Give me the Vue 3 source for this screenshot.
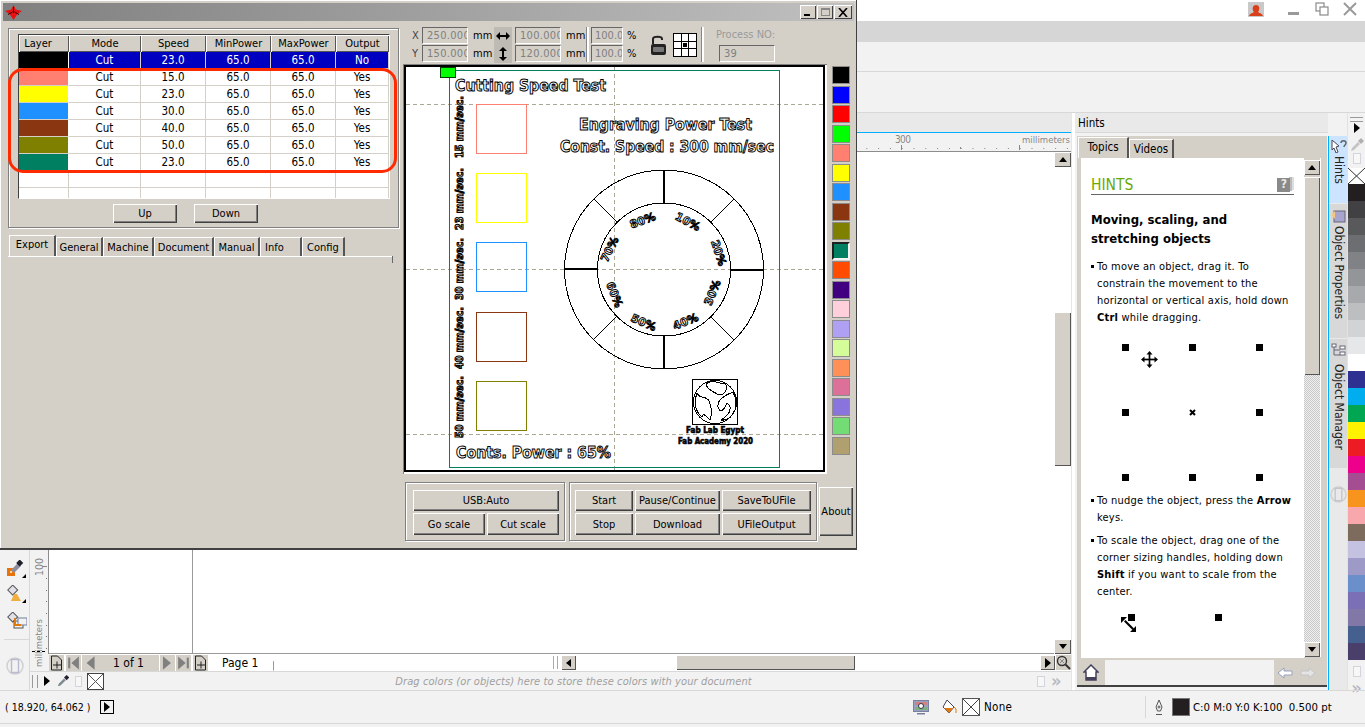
<script setup>
const layers = [
  { c: '#000000', s: '23.0', o: 'No', sel: true },
  { c: '#ff8070', s: '15.0', o: 'Yes' },
  { c: '#ffff00', s: '23.0', o: 'Yes' },
  { c: '#1e90ff', s: '30.0', o: 'Yes' },
  { c: '#8a3610', s: '40.0', o: 'Yes' },
  { c: '#808000', s: '50.0', o: 'Yes' },
  { c: '#008060', s: '23.0', o: 'Yes' }
]
const heads = ['Layer', 'Mode', 'Speed', 'MinPower', 'MaxPower', 'Output']
const tabs = [
  { t: 'Export', w: 47, active: true }, { t: 'General', w: 47 }, { t: 'Machine', w: 51 },
  { t: 'Document', w: 60 }, { t: 'Manual', w: 46 }, { t: 'Info', w: 42, left: true }, { t: 'Config', w: 43 }
]
const swatches = ['#000000','#0000ff','#ff0000','#00ff00','#ff8070','#ffff00','#1e90ff','#8a3610','#808000','#008060','#ff4c00','#400080','#ffd0dc','#b0a0f4','#d4fc98','#ff9058','#dc7098','#8874dc','#74dc74','#b0a070']
const selectedSwatch = '#008060'
const palette = ['#231f20','#414042','#58595b','#6d6e71','#808285','#939598','#a7a9ac','#bcbec0','#d1d3d4','#e6e7e8','#ffffff','#2e3192','#00aeef','#00a651','#fff200','#ed1c24','#ec008c','#a54d93','#f7941d','#f8a7ad','#7d6b5d','#c4c2e0','#9e9ac8','#6a8fcb','#7b6fb5','#8278a8','#45608f','#4a3f6b']
const squares = [
  { y: 104, c: '#ff8070' }, { y: 173, c: '#ffff00' }, { y: 242, c: '#1e90ff' },
  { y: 312, c: '#8a3610' }, { y: 381, c: '#808000' }
]
const vlabels = [
  { t: '15 mm/sec.', y: 158 }, { t: '23 mm/sec.', y: 230 }, { t: '30 mm/sec.', y: 300 },
  { t: '40 mm/sec.', y: 369 }, { t: '50 mm/sec.', y: 438 }
]
const pct = [
  { t: '10%', x: 686, y: 221, r: 28 }, { t: '20%', x: 715, y: 250, r: 72 },
  { t: '30%', x: 716, y: 290, r: -68 }, { t: '40%', x: 687, y: 321, r: -22 },
  { t: '50%', x: 642, y: 322, r: 24 }, { t: '60%', x: 611, y: 292, r: 68 },
  { t: '70%', x: 613, y: 247, r: -64 }, { t: '80%', x: 644, y: 220, r: -20 }
]
const hticks = Array.from({ length: 18 }, (_, i) => 866.3 + i * 11.8)
const vticks = [578, 590, 601, 613, 625, 636, 648]
const grid = Array.from({ length: 9 }, (_, i) => i)
</script>

<template>
  <div class="app">
    <header class="c-title">
      <svg class="ic-user" width="16" height="15" viewBox="0 0 16 15"><rect width="16" height="15" fill="#c9c9c9"/><path d="M1 14c1-3 4-3 5-4-2-2-2-7 2-7s4 5 2 7c1 1 4 1 5 4z" fill="#d8401c"/></svg>
      <span class="ic-min"></span>
      <svg class="ic-rest" width="14" height="14" viewBox="0 0 14 14" fill="#fff" stroke="#8a8a8a" stroke-width="1.2"><rect x="1" y="1" width="8" height="8"/><rect x="5" y="5" width="8" height="8"/></svg>
      <svg class="ic-close" width="14" height="14" viewBox="0 0 14 14" stroke="#9a9a9a" stroke-width="2"><path d="M1 1l12 12M13 1L1 13"/></svg>
    </header>
    <div class="c-menu"></div>
    <div class="c-tool"></div>
    <div class="c-prop"></div>

    <div class="c-work">
      <aside class="toolbox">
        <svg class="tool-ic t1" width="20" height="18" viewBox="0 0 20 18"><rect x="1" y="8" width="8" height="8" fill="#e8720c"/><rect x="4" y="11" width="2" height="2" fill="#ffd9a0"/><path d="M5 10l7-7 3 3-7 7z" fill="#8d8da0"/><rect x="11" y="0" width="5" height="5" fill="#20202c" transform="rotate(45 13 3)"/><path d="M16 18h4v-4z" fill="#000"/></svg>
        <svg class="tool-ic t2" width="20" height="18" viewBox="0 0 20 18"><rect x="3" y="1" width="7" height="7" fill="#dfe0ea" stroke="#555" transform="rotate(45 6 5)"/><path d="M5 16l3-7h3l4 7z" fill="#f0b040"/><path d="M16 18h4v-4z" fill="#000"/></svg>
        <svg class="tool-ic t3" width="20" height="18" viewBox="0 0 20 18"><rect x="2" y="1" width="7" height="7" fill="#dfe0ea" stroke="#555" transform="rotate(45 5 5)"/><rect x="7" y="9" width="9" height="7" fill="none" stroke="#555"/><rect x="11" y="6" width="9" height="7" fill="#f2f2f2" stroke="#7080a0"/><path d="M8 6v7h6" fill="none" stroke="#e07810" stroke-width="2"/></svg>
        <div class="tool-sep"></div>
        <svg class="tool-ic t4" width="18" height="18" viewBox="0 0 18 18" fill="none"><circle cx="9" cy="9" r="8" stroke="#cfcfcf" stroke-width="1.5"/><rect x="5.5" y="2.5" width="7" height="13" stroke="#b8bcd0" stroke-width="1.4"/></svg>
      </aside>

      <div class="doc-area">
        <div class="doc-tabs"></div>
        <div class="h-ruler">
          <svg class="ruler-svg" width="1041" height="19" viewBox="30 133 1041 19">
            <rect v-for="x in hticks" :key="x" :x="x" y="148" width="1" height="1" fill="#888"/>
            <path d="M901.5 145v5M960.5 147v2M1019.5 145v5" stroke="#888"/>
          </svg>
          <span class="r-300">300</span>
          <span class="r-mm">millimeters</span>
        </div>
        <div class="mid">
          <div class="v-ruler">
            <span class="vr-100">100</span>
            <span class="vr-mm">millimeters</span>
            <svg class="vr-ticks" width="19" height="120" viewBox="30 550 19 120">
              <rect v-for="y in vticks" :key="y" x="46" :y="y" width="1" height="1" fill="#777"/>
              <path d="M42 566.5h5" stroke="#888"/>
              <path d="M32 651.5h15" stroke="#000" stroke-dasharray="3 2"/>
            </svg>
          </div>
          <div class="canvas"><div class="page-line"></div></div>
          <div class="v-scroll">
            <div class="sb-btn"><span class="tri-up"></span></div>
            <div class="v-gap1"></div>
            <div class="v-thumb"></div>
            <div class="v-gap2"></div>
            <div class="sb-btn"><span class="tri-down"></span></div>
          </div>
        </div>
        <div class="pager">
          <svg class="pg-add" width="15" height="15" viewBox="0 0 15 15" fill="none" stroke="#222"><path d="M2.5.5h6l4 4v10h-10z"/><path d="M4 9.5h8M8 6v7"/></svg>
          <svg class="pg-first" width="14" height="14" viewBox="0 0 14 14" fill="#808080"><rect x="2" y="2" width="2" height="10"/><path d="M12 1v12L5 7z"/></svg>
          <svg class="pg-prev" width="10" height="14" viewBox="0 0 10 14" fill="#808080"><path d="M9 1v12L2 7z"/></svg>
          <span class="pg-txt">1 of 1</span>
          <svg class="pg-next" width="10" height="14" viewBox="0 0 10 14" fill="#808080"><path d="M1 1v12l7-6z"/></svg>
          <svg class="pg-last" width="14" height="14" viewBox="0 0 14 14" fill="#808080"><rect x="10" y="2" width="2" height="10"/><path d="M2 1v12l7-6z"/></svg>
          <svg class="pg-add2" width="15" height="15" viewBox="0 0 15 15" fill="none" stroke="#222"><path d="M2.5.5h6l4 4v10h-10z"/><path d="M4 9.5h8M8 6v7"/></svg>
          <div class="pg-tab">Page 1</div>
          <div class="grip"></div>
          <div class="sb-btn sb-left"><span class="tri-left"></span></div>
          <div class="h-thumb"></div>
          <div class="sb-btn sb-right"><span class="tri-right"></span></div>
          <svg class="zoom-ic" width="15" height="15" viewBox="0 0 15 15" fill="none" stroke="#333"><circle cx="6" cy="6" r="4.5" stroke-width="1.4"/><path d="M9.5 9.5l4.5 4.5" stroke-width="2"/><path d="M4 4l4 4M8 4l-4 4" stroke="#888"/></svg>
        </div>
        <div class="color-doc">
          <div class="cd-left">
            <span class="bars"></span>
            <span class="tri-right"></span>
            <svg class="cd-drop" width="14" height="14" viewBox="0 0 14 14"><path d="M1 13l1-3 6-6 2 2-6 6z" fill="#7f8a90"/><path d="M8 3l3-3 3 3-3 3z" fill="#223"/></svg>
            <span class="chip"></span>
            <svg class="xbox" width="17" height="17" viewBox="0 0 17 17"><rect x=".5" y=".5" width="16" height="16" fill="#fff" stroke="#444"/><path d="M1 1l15 15M16 1L1 16" stroke="#555"/></svg>
          </div>
          <span class="cd-text">Drag colors (or objects) here to store these colors with your document</span>
          <div class="cd-right">
            <span class="chip"></span>
            <span class="chev">»</span>
          </div>
        </div>
      </div>

      <div class="strip"></div>

      <section class="docker">
        <div class="dk-head">
          <span>Hints</span>
        </div>
        <div class="dk-panel">
          <div class="dk-tabs">
            <div class="dk-tab on">Topics</div>
            <div class="dk-tab">Videos</div>
          </div>
          <div class="dk-body">
            <div class="dk-content">
              <div class="hints-head">
                <span class="hints-t">HINTS</span>
                <svg width="17" height="15" viewBox="0 0 17 15"><rect x="14" y="0" width="3" height="13" fill="#ddd"/><rect x="12" y="0" width="3" height="14" fill="#bbb"/><rect y="1" width="13" height="14" fill="#8a8a8a"/></svg>
                <span class="q">?</span>
              </div>
              <h2 class="hd">Moving, scaling, and<br>stretching objects</h2>
              <ul class="bl first">
                <li>To move an object, drag it. To<br>constrain the movement to the<br>horizontal or vertical axis, hold down<br><b>Ctrl</b> while dragging.</li>
              </ul>
              <div class="handles">
                <template v-for="i in grid" :key="i">
                  <svg v-if="i === 4" width="7" height="7" viewBox="0 0 7 7" stroke="#000" stroke-width="2"><path d="M1 1l5 5M6 1L1 6"/></svg>
                  <span v-else class="hd-sq"></span>
                </template>
                <svg class="mv" width="17" height="17" viewBox="0 0 17 17" fill="#000"><path d="M8 3h1v11H8zM3 8h11v1H3z" stroke="#000" stroke-width=".7"/><path d="M8.5 0l3 3.5h-6zM8.5 17l3-3.5h-6zM0 8.500l3.500-3v6zM17 8.500l-3.500-3v6z"/></svg>
              </div>
              <ul class="bl second">
                <li>To nudge the object, press the <b>Arrow</b><br>keys.</li>
              </ul>
              <ul class="bl third">
                <li>To scale the object, drag one of the<br>corner sizing handles, holding down<br><b>Shift</b> if you want to scale from the<br>center.</li>
              </ul>
              <div class="handles2">
                <span class="hd-sq"></span>
                <span class="hd-sq"></span>
                <svg class="dg" width="16" height="16" viewBox="0 0 16 16" fill="#000"><path d="M3 4.500l1.500-1.500 8.500 8.500-1.500 1.500z"/><path d="M0 0h6L0 6zM15 15H9l6-6z"/></svg>
              </div>
            </div>
            <div class="dk-scroll">
              <div class="sb-btn"><span class="tri-up"></span></div>
              <div class="dk-thumb"></div>
              <div class="dk-dither"></div>
              <div class="sb-btn"><span class="tri-down"></span></div>
            </div>
          </div>
          <div class="dk-foot">
            <div class="f-home">
              <svg width="16" height="17" viewBox="0 0 16 17"><path d="M8 1L1 8h2v8h10V8h2z" fill="#fff" stroke="#45405a" stroke-width="1.500"/><rect x="3" y="13" width="10" height="3" fill="#45405a"/></svg>
            </div>
            <div class="f-mid"></div>
            <div class="f-nav">
              <svg width="16" height="12" viewBox="0 0 16 12"><path d="M1 6l6-5v3h8v4H7v3z" fill="#fff" stroke="#98a0c0"/></svg>
              <svg width="16" height="12" viewBox="0 0 16 12"><path d="M15 6L9 1v3H1v4h8v3z" fill="#e4e4e4" stroke="#c4c4c4"/></svg>
            </div>
          </div>
        </div>
      </section>

      <nav class="dk-side">
        <div class="vt on">
          <svg width="16" height="13" viewBox="0 0 16 13"><path d="M1 0l7 6-3 1 2 5-2 1-2-5-2 2z" fill="#fff" stroke="#445"/><path d="M10 3c0-3 5-3 5 0 0 2-2 2-2 4" fill="none" stroke="#666" stroke-width="1.500"/></svg>
          <span>Hints</span>
        </div>
        <div class="vt v2">
          <svg width="15" height="15" viewBox="0 0 15 15"><rect x="3" y="3" width="11" height="11" fill="#a8a4d0" stroke="#667"/><path d="M0 7l4-4v8z" fill="#f4c880"/></svg>
          <span>Object Properties</span>
        </div>
        <div class="vt v3">
          <svg width="15" height="15" viewBox="0 0 15 15" fill="#fff" stroke="#667"><rect x="1" y="1" width="4" height="3"/><rect x="9" y="3" width="5" height="3"/><rect x="9" y="9" width="5" height="3"/><path d="M3 4v8h6M3 7h6" fill="none"/></svg>
          <span>Object Manager</span>
        </div>
        <div class="vt-rest">
          <svg width="17" height="17" viewBox="0 0 18 18" fill="none"><circle cx="9" cy="9" r="8" stroke="#cfcfcf" stroke-width="1.500"/><rect x="5.500" y="2.500" width="7" height="13" stroke="#c4c4cc" stroke-width="1.400"/></svg>
        </div>
      </nav>

      <aside class="palette">
        <div class="p-top">
          <span class="p-bars"></span>
          <span class="tri-right"></span>
          <svg class="p-drop" width="14" height="14" viewBox="0 0 14 14"><path d="M1 13l1-3 6-6 2 2-6 6z" fill="#c4c4c4"/><path d="M8 3l3-3 3 3-3 3z" fill="#b0b0b0"/></svg>
          <span class="chip"></span>
        </div>
        <svg class="xbox" width="17" height="16" viewBox="0 0 17 16"><rect width="17" height="16" fill="#fff"/><path d="M0 0l17 16M17 0L0 16" stroke="#333"/></svg>
        <div v-for="(c, i) in palette" :key="i" class="p-c" :style="{ background: c }"></div>
        <div class="p-end">
          <span class="chip"></span>
          <span class="chev">»</span>
        </div>
      </aside>
    </div>

    <footer class="status">
      <span class="st-xy">( 18.920, 64.062 )</span>
      <span class="st-play"><span class="tri-right"></span></span>
      <svg class="st-mon" width="16" height="15" viewBox="0 0 16 15"><rect x=".5" y=".5" width="15" height="11" fill="#9aa0c0" stroke="#7a80a0"/><rect x="2" y="2" width="12" height="3" fill="#d08080"/><rect x="2" y="7" width="12" height="3" fill="#80b080"/><circle cx="8" cy="6" r="2.500" fill="#fff" stroke="#334"/><rect x="4" y="13" width="8" height="1.500" fill="#7a80a0"/></svg>
      <svg class="st-fill" width="16" height="16" viewBox="0 0 16 16"><path d="M6 1l7 7-5 6-6-6z" fill="#fff" stroke="#445"/><path d="M3 9h9l-4 5z" fill="#e07810"/><path d="M13 8l2 2v4" fill="none" stroke="#e07810"/></svg>
      <svg class="st-x" width="18" height="18" viewBox="0 0 18 18"><rect x=".5" y=".5" width="17" height="17" fill="#fff" stroke="#555"/><path d="M1 1l16 16M17 1L1 17" stroke="#444"/></svg>
      <span class="st-none">None</span>
      <span class="st-sep"></span>
      <svg class="st-pen" width="10" height="17" viewBox="0 0 10 17" fill="none" stroke="#555"><path d="M5 1l3 7-1.500 4h-3L2 8z"/><circle cx="5" cy="8" r="1"/><path d="M2 15.500h6"/></svg>
      <span class="st-black"></span>
      <span class="st-col">C:0 M:0 Y:0 K:100&nbsp;&nbsp;0.500 pt</span>
    </footer>

    <!-- floating laser-cutter window above the host application -->
    <div class="win">
      <div class="w-title">
        <svg class="w-logo" width="17" height="15" viewBox="0 0 17 15"><path d="M8.500 0l2.300 4.500 6.200 1.500-4.500 3-4 6-4-6L0 6l6.200-1.500z" fill="#e81010"/><path d="M8.500 2v6M3 9.500l4.500-2.500M14 9.500L9.500 7" stroke="#300" stroke-width="1" fill="none"/></svg>
        <div class="w-btns">
          <span class="w-b"><i class="b-min"></i></span>
          <span class="w-b"><i class="b-max"></i></span>
          <span class="w-b close">
            <svg width="10" height="9" viewBox="0 0 10 9" stroke="#000" stroke-width="1.600"><path d="M1 0l8 9M9 0L1 9"/></svg>
          </span>
        </div>
      </div>
      <div class="w-body">
        <div class="w-left">
          <div class="etched tbl-group">
            <div class="tbl">
              <div v-for="h in heads" :key="h" class="th">{{ h }}</div>
              <template v-for="(l, i) in layers" :key="i">
                <div class="td swatch" :style="{ background: l.c }"></div>
                <div class="td" :class="{ sel: l.sel }">Cut</div>
                <div class="td" :class="{ sel: l.sel }">{{ l.s }}</div>
                <div class="td" :class="{ sel: l.sel }">65.0</div>
                <div class="td" :class="{ sel: l.sel }">65.0</div>
                <div class="td" :class="{ sel: l.sel }">{{ l.o }}</div>
              </template>
              <template v-for="n in 12" :key="'e' + n">
                <div class="td"></div>
              </template>
            </div>
            <div class="updown">
              <button class="btn">Up</button>
              <button class="btn">Down</button>
            </div>
          </div>
          <div class="red-ring"></div>
          <div class="w-tabs">
            <div v-for="t in tabs" :key="t.t" class="w-tab" :class="{ on: t.active, left: t.left }" :style="{ width: t.w + 'px' }">{{ t.t }}</div>
          </div>
          <div class="w-tabline"><span></span></div>
        </div>

        <div class="w-right">
          <div class="ctrl">
            <span class="lb">X</span>
            <span class="fld">250.000</span>
            <span class="mm">mm</span>
            <span class="ar">
              <svg width="14" height="10" viewBox="0 0 14 10" fill="#000"><rect x="3" y="4" width="8" height="2"/><path d="M0 5l4-4v8zM14 5l-4-4v8z"/></svg>
            </span>
            <span class="fld mgl">100.000</span>
            <span class="mm">mm</span>
            <span class="vsep"></span>
            <span class="fld sm">100.0</span>
            <span class="mm pc">%</span>
            <svg class="lock" width="17" height="21" viewBox="0 0 17 21"><path d="M3 9V4c0-3 9-3 9 0v1" fill="none" stroke="#222" stroke-width="2"/><rect x="1" y="9" width="15" height="11" rx="2" fill="#222"/><rect x="3" y="12" width="11" height="5" rx="1" fill="#777"/></svg>
            <div class="gridbox">
              <span v-for="i in grid" :key="i" class="gc"><i v-if="i === 4"></i></span>
            </div>
            <span class="vsep2"></span>
            <div class="proc">
              <span class="proc-l">Process NO:</span>
              <span class="fld proc-f">39</span>
            </div>

            <span class="lb">Y</span>
            <span class="fld">150.000</span>
            <span class="mm">mm</span>
            <span class="ar">
              <svg width="10" height="14" viewBox="0 0 10 14" fill="#000"><rect x="4" y="3" width="2" height="8"/><path d="M5 0l4 4H1zM5 14l4-4H1z"/></svg>
            </span>
            <span class="fld mgl">120.000</span>
            <span class="mm">mm</span>
            <span class="fld sm">100.0</span>
            <span class="mm pc">%</span>
          </div>

          <div class="view-row">
            <div class="frame">
              <div class="inner">
                <svg class="drawing" width="417" height="403" viewBox="406 67 417 403" shape-rendering="crispEdges">
                  <g stroke="#a8a894" stroke-dasharray="4 3" fill="none">
                    <path d="M406 104.500h417M406 269.500h417M406 434.500h417M614.500 67v403"/>
                  </g>
                  <rect x="449.500" y="70.500" width="330" height="397" fill="none" stroke="#008060"/>
                  <rect x="440.500" y="67.500" width="15" height="10" fill="#00ff00" stroke="#004000"/>

                  <text class="ot" x="455" y="91" textLength="151" lengthAdjust="spacingAndGlyphs" font-size="15.500">Cutting Speed Test</text>
                  <text class="ot" x="579" y="130" textLength="173" lengthAdjust="spacingAndGlyphs" font-size="15.500">Engraving Power Test</text>
                  <text class="ot" x="560" y="152" textLength="214" lengthAdjust="spacingAndGlyphs" font-size="15.500">Const. Speed : 300 mm/sec</text>
                  <text class="ot" x="456" y="458" textLength="155" lengthAdjust="spacingAndGlyphs" font-size="15.500">Conts. Power : 65%</text>

                  <g v-for="s in squares" :key="s.y">
                    <rect x="476.500" :y="s.y + 0.500" width="50" height="49" fill="none" :stroke="s.c"/>
                  </g>
                  <text v-for="v in vlabels" :key="v.t" class="ot small" font-size="11" textLength="62" lengthAdjust="spacingAndGlyphs" :transform="`translate(463 ${v.y}) rotate(-90)`">{{ v.t }}</text>

                  <g fill="none" stroke="#000">
                    <circle cx="664" cy="269.500" r="99.500"/>
                    <circle cx="664" cy="269.500" r="66.500"/>
                    <path d="M664 170v34M663.500 335v34M564 268.500h34M730 270h34" stroke-width="2"/>
                    <path d="M711 222l23-23M594 199l23 23M617 316l-23 23M711 317l23 23"/>
                  </g>
                  <text v-for="p in pct" :key="p.t" class="ot pc-t" font-size="11" text-anchor="middle" :transform="`translate(${p.x} ${p.y + 4}) rotate(${p.r})`">{{ p.t }}</text>

                  <rect x="692.500" y="379.500" width="45" height="45" fill="#fff" stroke="#000"/>
                  <circle cx="715" cy="402" r="21.500" fill="none" stroke="#000"/>
                  <g fill="none" stroke="#000">
                    <path d="M706 384c2 7 7 7 11 10 6 3 11-3 9-9-1-3-7-1-10-3-2-1-7-1-10 2z"/>
                    <path d="M697 393c-3 9-2 18 5 24 2-5 3-1 8 3 3-8 1-13-1-19-3-6-9-1-12-8z"/>
                    <path d="M733 392c-7 3-16 7-15 15 2 7 6 3 8-2 1-4 5 1 4 5-1 5-6 8-9 10 6 1 11-4 14-10 2-6 1-12-2-18z"/>
                  </g>
                  <text class="lg" x="686" y="433" textLength="58" lengthAdjust="spacingAndGlyphs" font-size="8.500">Fab Lab Egypt</text>
                  <text class="lg" x="678" y="444" textLength="75" lengthAdjust="spacingAndGlyphs" font-size="8.500">Fab Academy 2020</text>
                </svg>
              </div>
            </div>
            <div class="swatches">
              <span v-for="c in swatches" :key="c" class="sw" :class="{ cur: c === selectedSwatch }" :style="{ background: c }"></span>
            </div>
          </div>

          <div class="bottom">
            <div class="etched g1">
              <button class="btn span2">USB:Auto</button>
              <button class="btn">Go scale</button>
              <button class="btn">Cut scale</button>
            </div>
            <div class="etched g2">
              <button class="btn">Start</button>
              <button class="btn">Pause/Continue</button>
              <button class="btn">SaveToUFile</button>
              <button class="btn">Stop</button>
              <button class="btn">Download</button>
              <button class="btn">UFileOutput</button>
            </div>
            <button class="btn about">About</button>
          </div>
        </div>
      </div>
    </div>
  </div>
</template>

<style>
html, body { margin: 0; background: #f2f2f2; overflow: hidden; }
</style>

<style scoped>
.app {
  position: relative; width: 1365px; height: 727px; overflow: hidden;
  display: flex; flex-direction: column; background: #f2f2f2;
  font: 11px "DejaVu Sans", "Liberation Sans", sans-serif; font-stretch: condensed; color: #000;
}
/* host app chrome */
.c-title { height: 21px; background: #fff; display: flex; align-items: center; position: relative; flex: none; }
.ic-user { margin-left: 1248px; margin-top: -2px; }
.ic-min { width: 11px; height: 3px; background: #999; margin-left: 24px; margin-top: 5px; }
.ic-rest { margin-left: 16px; margin-top: -3px; }
.ic-close { margin-left: 14px; margin-top: -3px; }
.c-menu { height: 21px; background: #d6d6d6; flex: none; }
.c-tool { height: 30px; box-sizing: border-box; border-bottom: 1px solid #d8d8d8; flex: none; }
.c-prop { height: 41px; box-sizing: border-box; border-bottom: 1px solid #d8d8d8; flex: none; }
.c-work { height: 577px; display: flex; flex: none; }

.toolbox { width: 30px; flex: none; box-sizing: border-box; border-right: 1px solid #d8d8d8; padding-top: 447px; display: flex; flex-direction: column; align-items: flex-start; }
.tool-ic { margin-left: 6px; }
.t2 { margin-top: 7px; margin-left: 6px; }
.t3 { margin-top: 9px; margin-left: 7px; }
.tool-sep { width: 25px; height: 1px; background: #d8d8d8; margin: 9px 0 0 4px; }
.t4 { margin-top: 17px; margin-left: 6px; }

.doc-area { width: 1041px; flex: none; display: flex; flex-direction: column; }
.doc-tabs { height: 20px; box-sizing: border-box; background: #e9e9e9; border-bottom: 1px solid #00aeff; flex: none; }
.h-ruler { height: 19px; box-sizing: border-box; position: relative; border-bottom: 1px solid #8c8c8c; flex: none; color: #888; font-size: 10px; }
.ruler-svg { display: block; position: absolute; left: 0; top: 0; }
.r-300 { position: absolute; left: 865px; top: 1px; letter-spacing: -.6px; }
.r-mm { position: absolute; left: 992px; top: 1px; font-size: 9.500px; }
.mid { flex: 1; display: flex; min-height: 0; }
.v-ruler { width: 19px; flex: none; position: relative; z-index: 2; color: #888; font-size: 9.500px; box-sizing: border-box; border-right: 1px solid #8c8c8c; }
.vr-100 { position: absolute; left: 3px; top: 406px; writing-mode: vertical-rl; transform: rotate(180deg); font-size: 10.500px; }
.vr-mm { position: absolute; left: 3px; top: 467px; writing-mode: vertical-rl; transform: rotate(180deg); white-space: nowrap; }
.vr-ticks { position: absolute; left: 0; top: 398px; }
.canvas { flex: 1; background: #fff; position: relative; border-bottom: 1px solid #9a9a9a; }
.page-line { position: absolute; left: 143px; top: 0; bottom: 0; width: 1px; background: #999; }
.v-scroll { width: 17px; flex: none; display: flex; flex-direction: column; background: #fff; }
.v-gap1 { height: 145px; }
.v-thumb { height: 154px; background: #d4d0c8; box-shadow: inset 1px 1px 0 #fff, inset -1px -1px 0 #555; }
.v-gap2 { flex: 1; }
.sb-btn { height: 15px; flex: none; background: #d4d0c8; box-shadow: inset 1px 1px 0 #fff, inset -1px -1px 0 #555; display: flex; align-items: center; justify-content: center; }
.tri-up { width: 0; height: 0; border: 4.500px solid transparent; border-top: 0; border-bottom: 5px solid #000; }
.tri-down { width: 0; height: 0; border: 4.500px solid transparent; border-bottom: 0; border-top: 5px solid #000; }
.tri-left { width: 0; height: 0; border: 4.500px solid transparent; border-left: 0; border-right: 5px solid #000; }
.tri-right { width: 0; height: 0; border: 5px solid transparent; border-right: 0; border-left: 6px solid #000; display: inline-block; }

.pager { height: 17px; flex: none; display: flex; align-items: center; padding-left: 19px; background: linear-gradient(90deg, #f2f2f2 19px, #fff 19px); box-sizing: border-box; position: relative; }
.pager > svg { background: #d4d0c8; }
.pg-add { width: 15px; height: 16px; box-sizing: border-box; }
.pg-first { margin-left: 2px; width: 15px; height: 16px; }
.pg-prev { margin-left: 1px; width: 16px; height: 16px; }
.pg-txt { background: #d4d0c8; height: 16px; width: 61px; box-sizing: border-box; text-align: center; line-height: 16px; font-size: 12px; }
.pg-next { margin-left: 1px; width: 15px; height: 16px; }
.pg-last { margin-left: 1px; width: 15px; height: 16px; }
.pg-add2 { margin-left: 2px; width: 15px; height: 16px; }
.pg-tab { width: 66px; height: 16px; background: #fff; box-sizing: border-box; border-right: 1px solid #999; clip-path: polygon(0 0, 58px 0, 100% 7px, 100% 100%, 0 100%); padding-left: 14px; line-height: 16px; font-size: 12px; }
.grip { width: 5px; height: 13px; margin-left: 279px; border-left: 1px solid #aaa; border-right: 1px solid #aaa; box-sizing: border-box; }
.sb-left { width: 15px; margin-left: 3px; }
.h-thumb { margin-left: 100px; width: 179px; height: 15px; background: #d4d0c8; box-shadow: inset 1px 1px 0 #fff, inset -1px -1px 0 #555; }
.sb-right { width: 15px; margin-left: 185px; }
.sb-right .tri-right { border-width: 5px 0 5px 6px; }
.zoom-ic { margin-left: 1px; }

.color-doc { height: 19px; flex: none; display: flex; align-items: center; box-sizing: border-box; border-top: 1px solid #d8d8d8; }
.cd-left { display: flex; align-items: center; padding-left: 2px; width: 72px; flex: none; }
.bars { width: 6px; height: 13px; box-sizing: border-box; border-left: 1px solid #999; border-right: 1px solid #999; }
.cd-left .tri-right { margin-left: 6px; }
.cd-drop { margin-left: 7px; }
.chip { width: 6px; height: 9px; display: inline-block; background: #f7f7f7; border: 1px solid #d4d4dc; margin-left: 6px; }
.xbox { display: block; flex: none; }
.color-doc .xbox { margin-left: 5px; }
.cd-text { flex: 1; text-align: center; color: #a0a0a0; font-style: italic; padding-left: 6px; white-space: nowrap; letter-spacing: .1px; }
.cd-right { width: 34px; flex: none; display: flex; align-items: center; }
.cd-right .chip { margin-left: 0; }
.chev { color: #b8b8c4; font-size: 18px; line-height: 14px; margin-left: 6px; font-weight: bold; }

.strip { width: 4px; flex: none; background: #fff; box-shadow: inset 1px 0 0 #e6e6e6; }
.docker { width: 253px; flex: none; display: flex; flex-direction: column; }
.dk-head { height: 20px; background: #e9e9e9; line-height: 20px; padding-left: 3px; font-size: 11.500px; border-bottom: 1px solid #d8d8d8; box-sizing: border-box; flex: none; }
.dk-panel { margin: 3px 1px 3px 2px; background: #d4d0c8; flex: 1; display: flex; flex-direction: column; box-sizing: border-box; border-bottom: 2px solid #404040; }
.dk-tabs { display: flex; height: 22px; align-items: flex-end; padding-left: 1px; flex: none; }
.dk-tab { height: 19px; width: 45px; box-sizing: border-box; border-top: 1px solid #fff; border-left: 1px solid #fff; border-right: 2px solid #555; text-align: center; line-height: 19px; font-size: 11.500px; }
.dk-tab.on { height: 21px; width: 51px; }
.dk-body { display: flex; margin-left: 4px; height: 500px; flex: none; }
.dk-content { width: 223px; background: #fff; padding-left: 10px; box-sizing: border-box; overflow: hidden; position: relative; }
.hints-head { margin-top: 19px; height: 18px; width: 203px; box-sizing: border-box; border-bottom: 1px solid #666; display: flex; justify-content: space-between; position: relative; }
.hints-t { color: #6aaa00; font-size: 15.500px; line-height: 17px; }
.q { position: absolute; right: 7px; top: 0; color: #e8e8e8; font-weight: bold; font-size: 12px; }
.hd { margin: 15px 0 0; font-size: 13px; line-height: 19px; font-weight: bold; }
.bl { list-style: none; margin: 0; padding: 0 0 0 6px; line-height: 17px; position: relative; letter-spacing: .22px; }
.bl::before { content: ""; position: absolute; left: 0; top: 7px; width: 3px; height: 3px; background: #000; }
.first { margin-top: 10px; }
.second { margin-top: 11px; }
.third { margin-top: 6px; }
.handles { margin: 18px 0 0 31px; display: grid; grid-template-columns: repeat(3, 7px); grid-auto-rows: 7px; column-gap: 60px; row-gap: 58px; position: relative; width: 141px; }
.hd-sq { width: 7px; height: 7px; background: #000; display: block; }
.mv { position: absolute; left: 19px; top: 7px; }
.handles2 { margin: 14px 0 0 37px; display: flex; gap: 80px; position: relative; }
.dg { position: absolute; left: -7px; top: 3px; }
.dk-scroll { width: 16px; flex: none; display: flex; flex-direction: column; padding-top: 2px; height: 499px; box-sizing: border-box; box-shadow: 1px 0 0 #fff; }
.dk-thumb { height: 198px; margin-top: 2px; background: #d4d0c8; box-shadow: inset 1px 1px 0 #fff, inset -1px -1px 0 #555; flex: none; }
.dk-dither { flex: 1; background: repeating-conic-gradient(#c8c8c8 0 25%, #f0f0f0 0 50%) 0 0 / 2px 2px; }
.dk-foot { display: flex; height: 25px; margin-top: 2px; }
.f-home { width: 28px; display: flex; align-items: center; justify-content: center; }
.f-mid { width: 169px; background: #f2f2f2; }
.f-nav { flex: 1; display: flex; align-items: center; gap: 7px; padding-left: 3px; }

.dk-side { width: 20px; flex: none; margin-top: 23px; display: flex; flex-direction: column; box-sizing: border-box; border-left: 1px solid #00aeff; background: #e9e9e9; }
.vt { background: #d8d8d8; display: flex; flex-direction: column; align-items: center; padding-top: 4px; font-size: 12px; box-sizing: border-box; margin-bottom: 1px; color: #222; }
.vt span { writing-mode: vertical-rl; white-space: nowrap; margin-top: 3px; }
.vt.on { background: #cce4ff; height: 67px; }
.vt.v2 { height: 134px; }
.vt.v3 { height: 129px; }
.vt.v3 span { margin-top: 6px; }
.vt-rest { padding: 17px 0 0 1px; }

.palette { width: 17px; flex: none; display: flex; flex-direction: column; background: #f2f2f2; box-shadow: -1px 0 0 #e2e2e2; }
.p-top { height: 55px; flex: none; display: flex; flex-direction: column; align-items: center; box-sizing: border-box; padding-top: 4px; }
.p-bars { width: 13px; height: 5px; border-top: 1px solid #999; border-bottom: 1px solid #999; box-sizing: border-box; }
.p-top .tri-right { margin-top: 1px; }
.p-drop { margin-top: 5px; }
.p-top .chip { margin: 1px 0 0; }
.p-c { height: 17px; flex: none; }
.p-c:last-of-type { height: 5px; }
.p-end { flex: 1; display: flex; flex-direction: column; align-items: center; padding-top: 6px; }
.p-end .chip { margin: 0; }
.p-end .chev { margin: 4px 0 0; }

.status { height: 34px; flex: none; box-sizing: border-box; border-top: 1px solid #d8d8d8; border-bottom: 1px solid #d8d8d8; display: flex; align-items: center; }
.st-xy { margin-left: 5px; width: 95px; white-space: nowrap; font-size: 10.500px; }
.st-play { width: 14px; height: 14px; box-sizing: border-box; border: 1px solid #000; display: flex; align-items: center; justify-content: center; }
.st-mon { margin-left: 799px; }
.st-fill { margin-left: 12px; }
.st-x { margin-left: 5px; }
.st-none { margin-left: 4px; font-size: 11.500px; letter-spacing: .3px; width: 30px; }
.st-sep { width: 1px; height: 22px; background: #d8d8d8; margin-left: 131px; }
.st-pen { margin-left: 8px; }
.st-black { width: 16px; height: 16px; background: #231f20; border: 1px solid #777; margin-left: 8px; }
.st-col { margin-left: 3px; white-space: nowrap; font-size: 11.300px; }

/* laser cutter window */
.win {
  position: absolute; left: 0; top: 0; z-index: 5; width: 857px; height: 550px; box-sizing: border-box;
  background: #d4d0c8; border-right: 1px solid #404040; border-bottom: 2px solid #404040;
  display: flex; flex-direction: column; box-shadow: inset 1px 1px 0 #fff;
}
.w-title { height: 18px; margin: 3px 2px 0 3px; flex: none; background: linear-gradient(90deg, #808080, #c0c0c0); display: flex; align-items: center; justify-content: space-between; }
.w-logo { margin-left: 2px; }
.w-btns { display: flex; gap: 1px; margin-right: 2px; }
.w-b { width: 16px; height: 14px; background: #d4d0c8; box-sizing: border-box; box-shadow: inset 1px 1px 0 #fff, inset -1px -1px 0 #404040; display: flex; align-items: center; justify-content: center; position: relative; }
.w-b.close { width: 18px; }
.b-min { width: 6px; height: 2px; background: #000; position: absolute; left: 4px; bottom: 3px; }
.b-max { width: 9px; height: 8px; box-sizing: border-box; border: 1px solid #888; border-top-width: 2px; }
.w-body { flex: 1; display: flex; min-height: 0; }
.w-left { width: 400px; flex: none; padding-left: 8px; box-sizing: border-box; position: relative; }
.etched { box-sizing: border-box; border: 1px solid #808080; box-shadow: inset 1px 1px 0 #fff, 1px 1px 0 #fff; }
.tbl-group { margin-top: 7px; width: 391px; height: 200px; padding: 5px 0 0 9px; }
.tbl { width: 372px; height: 165px; box-sizing: border-box; border: 1px solid #404040; border-right-color: #fff; border-bottom-color: #fff; background: #fff; display: grid; grid-template-columns: 50px 72px 65px 65px 65px 53px; grid-auto-rows: 17px; overflow: hidden; text-align: center; line-height: 17px; font-size: 11.500px; }
.th { background: #d4d0c8; box-shadow: inset 1px 1px 0 #fff, inset -1px -1px 0 #555; font-size: 11px; line-height: 17px; }
.th:first-child { padding-right: 12px; }
.td { box-sizing: border-box; border-right: 1px solid #d4d0c8; border-bottom: 1px solid #d4d0c8; }
.td.sel { background: #0000c0; color: #fff; }
.swatch { border-right-color: #fff; }
.updown { display: flex; gap: 17px; margin: 5px 0 0 95px; }
.updown .btn { width: 64px; height: 19px; }
.btn { font: inherit; font-stretch: condensed; padding: 0; border: 0; background: #d4d0c8; color: #000; box-shadow: inset 1px 1px 0 #fff, inset -1px -1px 0 #404040, inset -2px -2px 0 #808080; font-size: 11px; white-space: nowrap; }
.red-ring { position: absolute; left: 8px; top: 47px; width: 389px; height: 105px; box-sizing: border-box; border: 3px solid #ff2a00; border-radius: 15px; }
.w-tabs { display: flex; align-items: flex-end; height: 21px; margin-top: 7px; padding-left: 1px; }
.w-tab { height: 19px; box-sizing: border-box; border-top: 1px solid #fff; border-left: 1px solid #fff; border-right: 2px solid #555; text-align: center; line-height: 19px; font-size: 11px; }
.w-tab.on { height: 21px; line-height: 18px; }
.w-tab.left { text-align: left; padding-left: 4px; }
.w-tabline { width: 385px; height: 7px; border-top: 1px solid #fff; position: relative; }
.w-tabline span { position: absolute; right: 0; top: -1px; width: 1px; height: 7px; background: #666; }

.w-right { flex: 1; display: flex; flex-direction: column; margin-left: 3px; min-width: 0; }
.ctrl { display: grid; grid-template-columns: 10px 46px 26px 18px 49px 26px 4px 32px 27px 23px 29px 14px 1fr; grid-template-rows: 17px 17px; row-gap: 1px; padding: 6px 0 0 9px; height: 43px; box-sizing: border-box; align-items: center; flex: none; }
.lb { color: #444; font-size: 11px; }
.fld { height: 17px; box-sizing: border-box; border: 1px solid; border-color: #666 #fff #fff #666; color: #808080; overflow: hidden; white-space: nowrap; line-height: 15px; padding-left: 4px; font-size: 11px; letter-spacing: .3px; }
.fld.mgl { margin-left: 3px; }
.fld.sm { padding-left: 3px; letter-spacing: 0; }
.mm { padding-left: 5px; font-size: 11px; }
.pc { padding-left: 4px; }
.ar { background: #bdbbb4; height: 18px; display: flex; align-items: center; justify-content: center; }
.vsep { grid-row: span 2; width: 2px; height: 35px; background: #fff; box-shadow: -1px 0 0 #888; }
.lock { grid-row: span 2; margin-top: 2px; }
.gridbox { grid-row: span 2; width: 24px; height: 24px; display: grid; grid-template: repeat(3, 1fr) / repeat(3, 1fr); border: 1px solid #000; box-sizing: border-box; gap: 1px; background-color: #000; margin-top: 1px; }
.gc { background: #fff; display: flex; align-items: center; justify-content: center; }
.gc i { width: 4px; height: 4px; background: #000; display: block; }
.vsep2 { grid-row: span 2; width: 2px; height: 35px; background: #fff; box-shadow: -1px 0 0 #888; }
.proc { grid-row: span 2; display: flex; flex-direction: column; gap: 3px; align-self: start; }
.proc-l { color: #9a9a9a; font-size: 11px; line-height: 14px; white-space: nowrap; margin-top: 1px; }
.proc-f { width: 56px; margin-left: 3px; }
.view-row { display: flex; flex: none; height: 410px; }
.frame { width: 424px; height: 410px; box-sizing: border-box; border-top: 1px solid #808080; border-left: 1px solid #808080; padding: 0 2px 2px 0; background: #fff; flex: none; }
.inner { border: 2px solid #000; background: #fff; width: 417px; height: 403px; }
.drawing { display: block; }
.ot { fill: #fff; stroke: #000; stroke-width: 1px; font-family: "DejaVu Sans", sans-serif; font-weight: bold; font-stretch: normal; }
.ot.small { stroke-width: 1.100px; }
.pc-t { stroke-width: 1px; font-size: 11px; }
.lg { fill: #000; stroke: #000; stroke-width: .6px; font-family: "DejaVu Sans", sans-serif; font-weight: bold; }
.swatches { margin: 2px 0 0 5px; height: 389px; width: 18px; display: flex; flex-direction: column; justify-content: space-between; flex: none; }
.sw { height: 18px; box-sizing: border-box; border: 1px solid #8c8c8c; display: block; }
.sw.cur { border: 2px solid; border-color: #202020 #f4f4f4 #f4f4f4 #202020; }
.bottom { display: flex; margin: 8px 0 0 2px; flex: none; }
.bottom .etched { height: 59px; padding: 7px 0 0 7px; display: grid; grid-template-rows: 21px 22px; row-gap: 2px; column-gap: 2px; }
.g1 { width: 160px; grid-template-columns: 72px 72px; }
.span2 { grid-column: span 2; }
.bottom .g2 { width: 248px; margin-left: 4px; grid-template-columns: 58px 85px 89px; padding-left: 5px; }
.about { width: 34px; height: 49px; margin: 5px 0 0 2px; }
</style>
